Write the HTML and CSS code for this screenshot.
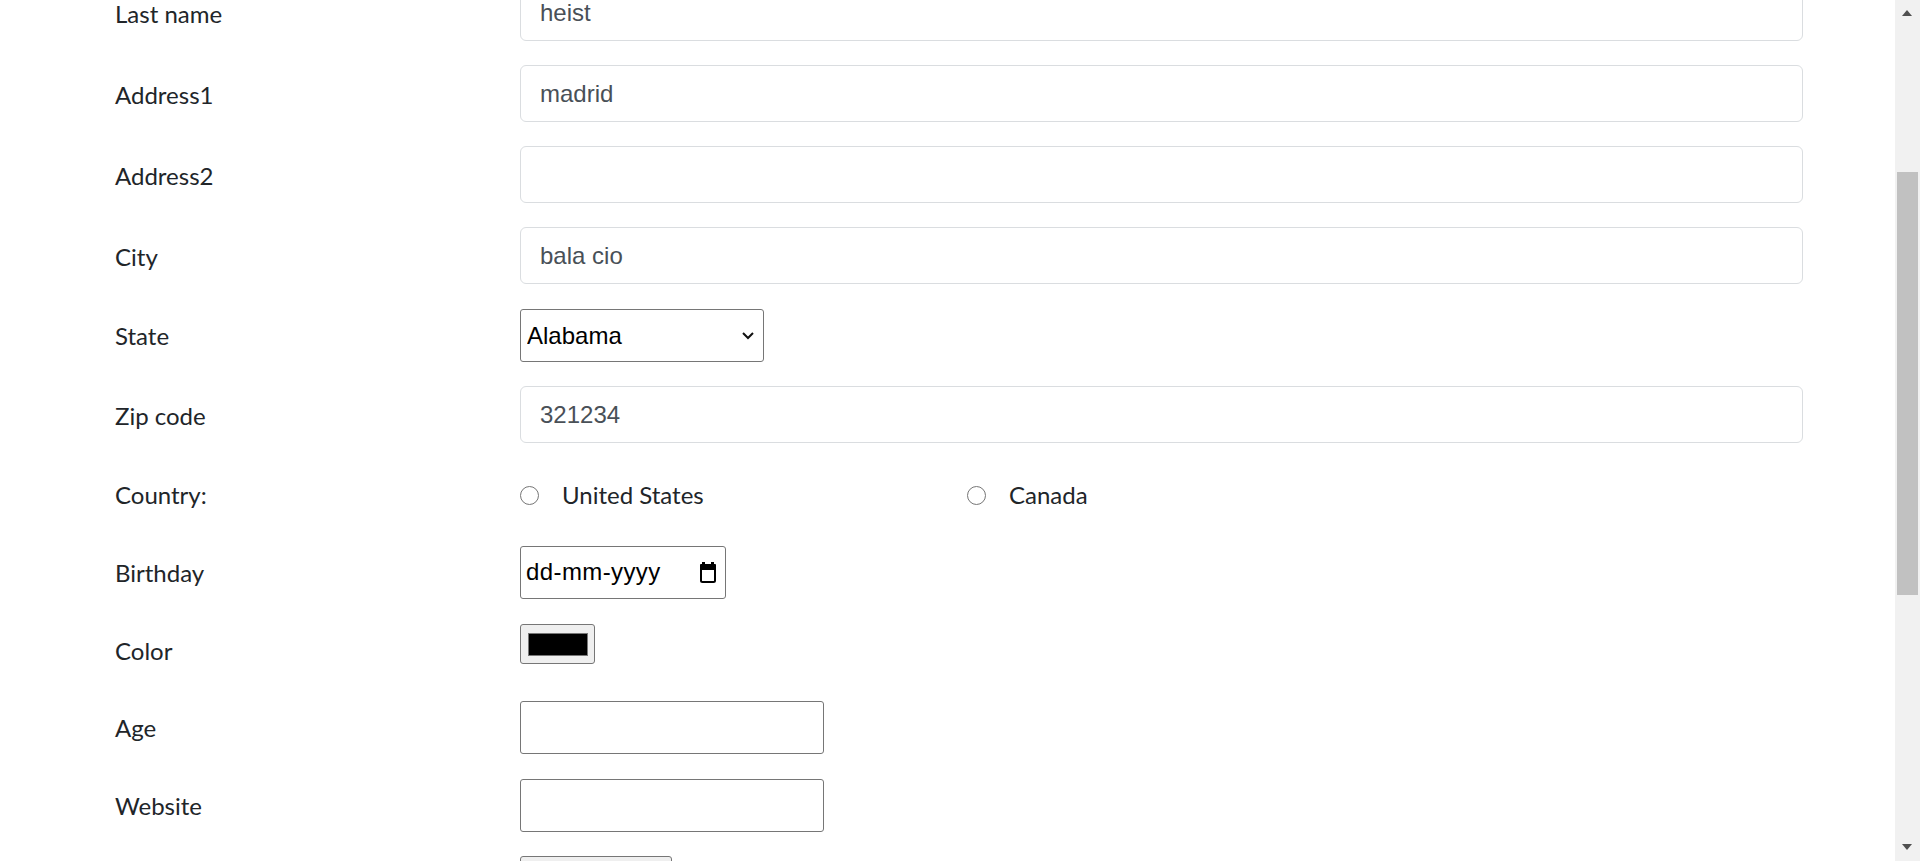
FILE: index.html
```html
<!DOCTYPE html>
<html lang="en">
<head>
<meta charset="utf-8">
<title>Form</title>
<link rel="stylesheet" href="styles.css">
</head>
<body>
<main class="page">
  <form class="form">
    <div class="row">
      <label class="lbl" for="lname">Last name</label>
      <div class="ctl"><input class="fc" id="lname" type="text" value="heist"></div>
    </div>
    <div class="row">
      <label class="lbl" for="addr1">Address1</label>
      <div class="ctl"><input class="fc" id="addr1" type="text" value="madrid"></div>
    </div>
    <div class="row">
      <label class="lbl" for="addr2">Address2</label>
      <div class="ctl"><input class="fc" id="addr2" type="text" value=""></div>
    </div>
    <div class="row">
      <label class="lbl" for="city">City</label>
      <div class="ctl"><input class="fc" id="city" type="text" value="bala cio"></div>
    </div>
    <div class="row">
      <label class="lbl" for="state">State</label>
      <div class="ctl">
        <div class="sel-wrap">
          <select class="sel" id="state">
            <option>Alabama</option>
            <option>Alaska</option>
          </select>
          <svg class="chev" width="14" height="9" viewBox="0 0 14 9" aria-hidden="true"><path d="M2 2 L7 7 L12 2" fill="none" stroke="#111" stroke-width="2"/></svg>
        </div>
      </div>
    </div>
    <div class="row">
      <label class="lbl" for="zip">Zip code</label>
      <div class="ctl"><input class="fc" id="zip" type="text" value="321234"></div>
    </div>
    <div class="row row-country">
      <span class="lbl">Country:</span>
      <div class="ctl radios">
        <label class="radio-opt"><input class="radio" type="radio" name="country"><span>United States</span></label>
        <label class="radio-opt"><input class="radio" type="radio" name="country"><span>Canada</span></label>
      </div>
    </div>
    <div class="row">
      <span class="lbl">Birthday</span>
      <div class="ctl">
        <div class="date">
          <span class="date-text">dd-mm-yyyy</span>
          <svg class="cal" width="18" height="22" viewBox="0 0 18 22" aria-hidden="true">
            <rect x="3" y="1" width="3" height="4" fill="#000"/>
            <rect x="12" y="1" width="3" height="4" fill="#000"/>
            <rect x="1" y="3" width="16" height="6" rx="1" fill="#000"/>
            <rect x="2" y="4" width="14" height="17" rx="1.5" fill="none" stroke="#000" stroke-width="2"/>
          </svg>
        </div>
      </div>
    </div>
    <div class="row row-top">
      <span class="lbl">Color</span>
      <div class="ctl">
        <div class="color"><span class="swatch"></span></div>
      </div>
    </div>
    <div class="row">
      <label class="lbl" for="age">Age</label>
      <div class="ctl"><input class="plain" id="age" type="text"></div>
    </div>
    <div class="row">
      <label class="lbl" for="web">Website</label>
      <div class="ctl"><input class="plain" id="web" type="text"></div>
    </div>
    <div class="row row-btn">
      <span class="lbl"></span>
      <div class="ctl"><button class="btn" type="button" aria-label="Submit"></button></div>
    </div>
  </form>
</main>
<div class="scrollbar" aria-hidden="true">
  <span class="arr arr-up"></span>
  <span class="thumb"></span>
  <span class="arr arr-down"></span>
</div>
</body>
</html>
```

FILE: styles.css
```css
html, body {
  margin: 0;
  padding: 0;
  height: 100%;
  overflow: hidden;
  background: #fff;
}

body {
  font-family: "Lato", "Open Sans", sans-serif;
  color: #212529;
}

.page {
  width: 1895px;
}

.form {
  display: flex;
  flex-direction: column;
  gap: 24px;
  padding-left: 115px;
  margin-top: -16px;
}

.row {
  display: grid;
  grid-template-columns: 405px 1283px;
  align-items: center;
}

.lbl {
  display: block;
  font-size: 24px;
  line-height: 36px;
  padding: 10px 0 8px;
  min-height: 36px;
}

.row-top .ctl {
  align-self: start;
  padding-top: 1px;
}

.row-top .lbl {
  padding-top: 10px;
  padding-bottom: 7px;
}

.row-btn {
  align-items: start;
}

.row-btn .lbl {
  padding: 0;
  min-height: 0;
}

.row-country .lbl {
  padding-top: 10px;
  padding-bottom: 8px;
}

.ctl {
  display: flex;
  align-items: center;
}

.fc {
  box-sizing: border-box;
  width: 1283px;
  height: 57px;
  margin: 0;
  padding: 0 19px;
  border: 1.5px solid #dadde0;
  border-radius: 6px;
  background: #fff;
  font-family: "Liberation Sans", Arial, sans-serif;
  font-size: 24px;
  color: #495057;
  outline: none;
}

.sel-wrap {
  position: relative;
  width: 244px;
  height: 53px;
}

.sel {
  appearance: none;
  -webkit-appearance: none;
  box-sizing: border-box;
  width: 244px;
  height: 53px;
  margin: 0;
  padding: 0 30px 0 6px;
  border: 1.5px solid #767676;
  border-radius: 3px;
  background: #fff;
  font-family: "Liberation Sans", Arial, sans-serif;
  font-size: 24px;
  color: #000;
}

.chev {
  position: absolute;
  right: 9px;
  top: 22px;
  pointer-events: none;
}

.radios {
  height: 54px;
  align-items: center;
  padding-top: 2px;
  box-sizing: border-box;
}

.radio-opt {
  display: flex;
  align-items: center;
  width: 447px;
  font-size: 24px;
  line-height: 36px;
}

.radio {
  appearance: none;
  -webkit-appearance: none;
  box-sizing: border-box;
  width: 19px;
  height: 19px;
  margin: 0 23px 0 0;
  border: 1.5px solid #767676;
  border-radius: 50%;
  background: #fff;
  flex: none;
}

.date {
  box-sizing: border-box;
  width: 206px;
  height: 53px;
  border: 1.5px solid #767676;
  border-radius: 3px;
  display: flex;
  align-items: center;
  justify-content: space-between;
  padding: 0 8px 0 5px;
  background: #fff;
}

.date-text {
  font-family: "Liberation Sans", Arial, sans-serif;
  font-size: 24px;
  color: #000;
  letter-spacing: 0.4px;
}

.cal {
  display: block;
  margin-top: -1px;
}

.color {
  box-sizing: border-box;
  width: 75px;
  height: 40px;
  border: 1.5px solid #767676;
  border-radius: 3px;
  background: #efefef;
  display: flex;
  align-items: center;
  justify-content: center;
}

.swatch {
  display: block;
  width: 60px;
  height: 23px;
  box-sizing: border-box;
  background: #000;
  border: 1.5px solid #777;
}

.plain {
  box-sizing: border-box;
  width: 304px;
  height: 53px;
  margin: 0;
  padding: 0 6px;
  border: 1.5px solid #767676;
  border-radius: 3px;
  background: #fff;
  font-family: "Liberation Sans", Arial, sans-serif;
  font-size: 24px;
  outline: none;
}

.btn {
  box-sizing: border-box;
  width: 152px;
  height: 47px;
  margin: 0;
  border: 1.5px solid #767676;
  border-radius: 3px;
  background: #efefef;
}

.scrollbar {
  position: fixed;
  top: 0;
  right: 0;
  width: 25px;
  height: 100%;
  background: #f1f1f1;
}

.thumb {
  position: absolute;
  left: 2px;
  right: 2px;
  top: 172px;
  height: 423px;
  background: #c1c1c1;
}

.arr {
  position: absolute;
  left: 7px;
  width: 0;
  height: 0;
  border-left: 5.5px solid transparent;
  border-right: 5.5px solid transparent;
}

.arr-up {
  top: 10px;
  border-bottom: 6px solid #505050;
}

.arr-down {
  bottom: 11px;
  border-top: 6px solid #505050;
}
```
